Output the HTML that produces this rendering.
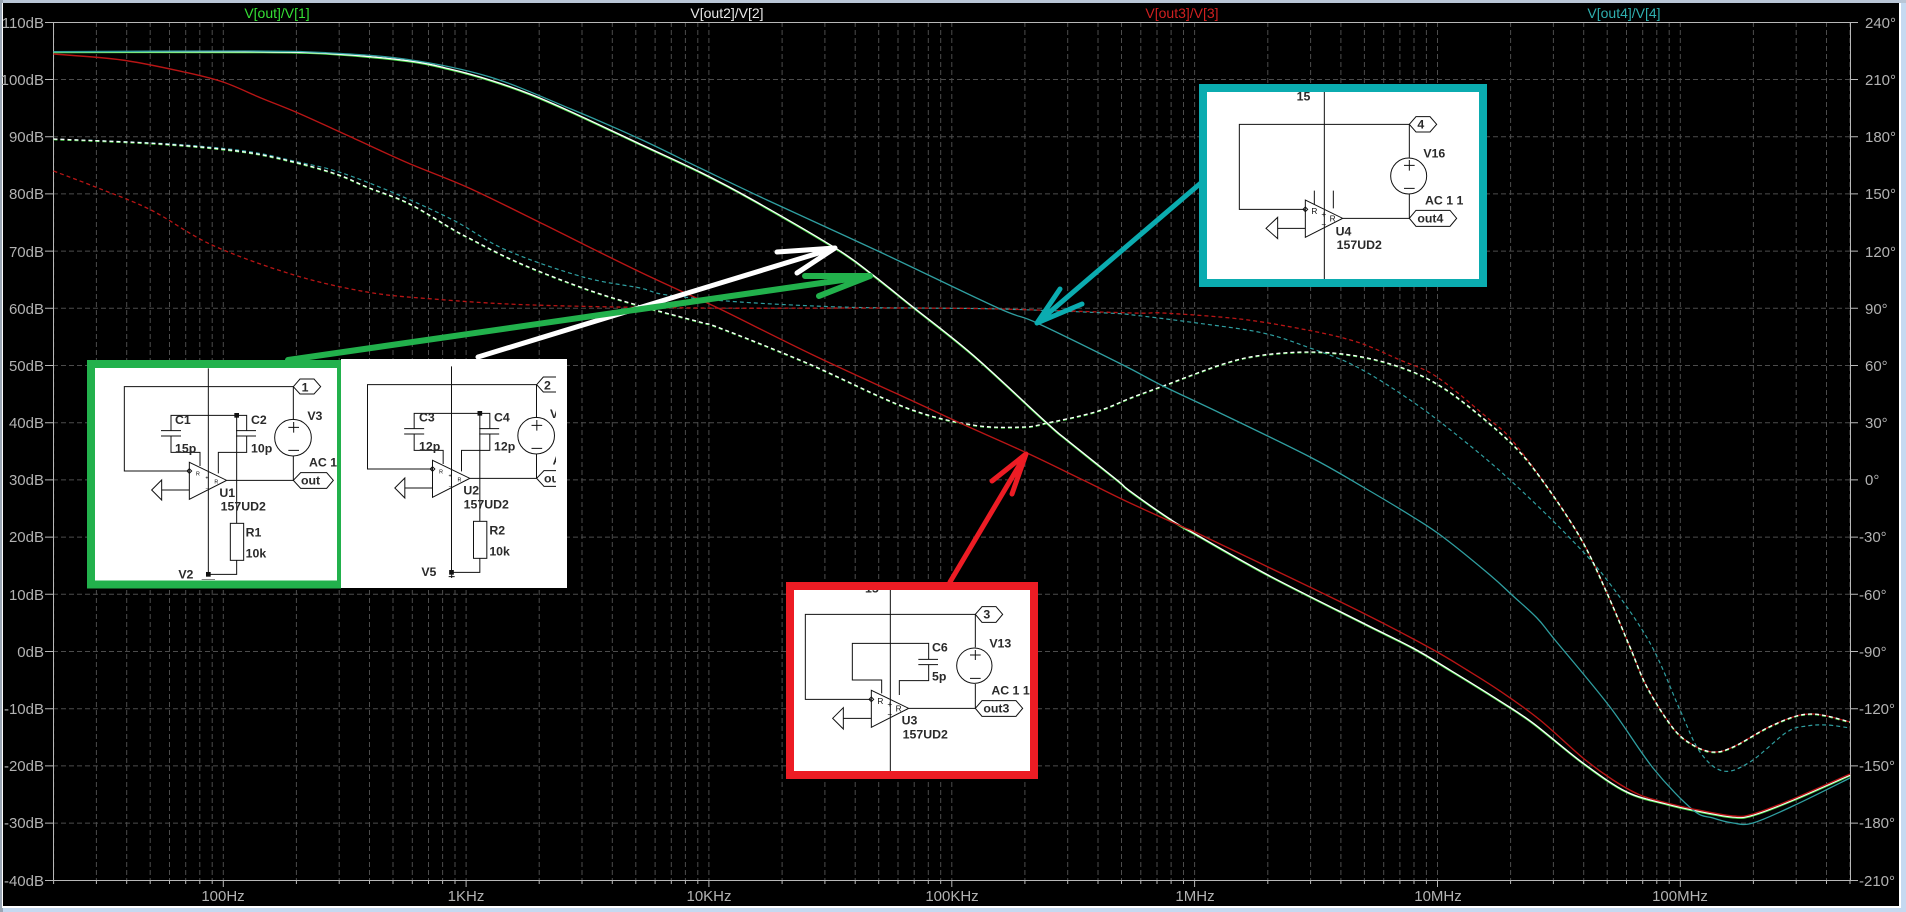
<!DOCTYPE html>
<html>
<head>
<meta charset="utf-8">
<style>
html,body{margin:0;padding:0;width:1906px;height:912px;overflow:hidden;background:#c5d9f0}
svg{display:block;position:absolute;left:0;top:0}
text{font-family:"Liberation Sans",sans-serif}
.ax text{font-size:15px;fill:#b2b2b2}
.hd text{font-size:14px;text-anchor:middle}
.sc text{font-size:37px;font-weight:bold;fill:#2a2a2a}
.sc .s{font-size:25px;font-weight:normal;fill:#111}
.w{fill:none;stroke:#111;stroke-width:3}
</style>
</head>
<body>
<svg width="1906" height="912" viewBox="0 0 1906 912">
<defs>
<clipPath id="pl"><rect x="53" y="22" width="1798" height="859"/></clipPath>
<clipPath id="cg"><rect x="95" y="368" width="242" height="212"/></clipPath>
<clipPath id="cw"><rect x="341" y="359" width="215" height="229"/></clipPath>
<clipPath id="ct"><rect x="1207" y="92" width="272" height="187"/></clipPath>
<clipPath id="cr"><rect x="794" y="590" width="236" height="181"/></clipPath>
<path id="dec" d="M73.1 22V880M115.9 22V880M146.2 22V880M169.7 22V880M189 22V880M205.2 22V880M219.3 22V880M231.7 22V880M242.8 22V880"/>
<path id="tic" d="M73.1 880v4M115.9 880v4M146.2 880v4M169.7 880v4M189 880v4M205.2 880v4M219.3 880v4M231.7 880v4M242.8 880v7"/>
<g id="sch">
<path class="w" d="M670 140H163V393H358M415 85V703M670 140V240M670 347V421M470 421H670M358 367V478L470 421ZM275 450H358M303 272V226H530V272M273 272H333M273 288H333M498 272H558M498 288H558M303 288V337H390V378M530 288V337H445V400M500 226V550M500 661V703H415M655 262H687M671 246V278M655 331H687"/>
<circle class="w" cx="669" cy="293" r="55"/>
<path class="w" d="M245 450L275 420V480Z"/>
<rect class="w" x="481" y="550" width="40" height="111"/>
<rect x="493" y="219" width="14" height="14" fill="#111"/>
<rect x="408" y="696" width="14" height="14" fill="#111"/>
<path class="w" d="M351 393l7-7 7 7-7 7z"/>
<text class="s" x="378" y="406">R</text><text class="s" x="406" y="418">+</text><text class="s" x="406" y="450">−</text><text class="s" x="433" y="431">R</text>
</g>
</defs>

<rect width="1906" height="912" fill="#c5d9f0"/>
<rect x="0" y="0" width="1906" height="3" fill="#b9c6d6"/>
<rect x="0" y="0" width="3" height="912" fill="#9aa6b4"/>
<rect x="2" y="3" width="1899" height="905" fill="#fff"/>
<rect x="3" y="3" width="1896" height="903" fill="#000"/>

<!-- grid -->
<g clip-path="url(#pl)" fill="none" stroke="#4c4c4c" stroke-width="1" stroke-dasharray="5 3">
<use href="#dec" x="-19.5"/><use href="#dec" x="223.3"/><use href="#dec" x="466.1"/><use href="#dec" x="709"/><use href="#dec" x="951.8"/><use href="#dec" x="1194.7"/><use href="#dec" x="1437.5"/><use href="#dec" x="1680.3"/>
<path d="M53 79.5H1850M53 136.7H1850M53 193.9H1850M53 251.1H1850M53 308.3H1850M53 365.5H1850M53 422.7H1850M53 479.9H1850M53 537.1H1850M53 594.3H1850M53 651.5H1850M53 708.7H1850M53 765.9H1850M53 823.1H1850"/>
</g>

<!-- axes -->
<g fill="none" stroke="#b8b8b8" stroke-width="1">
<rect x="53.5" y="22.5" width="1797" height="858"/>
<path d="M45 22.5h8M45 79.5h8M45 136.7h8M45 193.9h8M45 251.1h8M45 308.3h8M45 365.5h8M45 422.7h8M45 479.9h8M45 537.1h8M45 594.3h8M45 651.5h8M45 708.7h8M45 765.9h8M45 823.1h8M45 880.5h8"/>
<path d="M1851 22.5h7M1851 79.5h7M1851 136.7h7M1851 193.9h7M1851 251.1h7M1851 308.3h7M1851 365.5h7M1851 422.7h7M1851 479.9h7M1851 537.1h7M1851 594.3h7M1851 651.5h7M1851 708.7h7M1851 765.9h7M1851 823.1h7M1851 880.5h7"/>
<use href="#tic" x="-19.5"/><use href="#tic" x="223.3"/><use href="#tic" x="466.1"/><use href="#tic" x="709"/><use href="#tic" x="951.8"/><use href="#tic" x="1194.7"/><use href="#tic" x="1437.5"/>
<path d="M1753.4 880v4M1796.2 880v4M1826.5 880v4M1850 880v4"/>
</g>

<g class="ax" text-anchor="end">
<text x="44" y="28">110dB</text><text x="44" y="85">100dB</text><text x="44" y="142">90dB</text><text x="44" y="199">80dB</text><text x="44" y="257">70dB</text><text x="44" y="314">60dB</text><text x="44" y="371">50dB</text><text x="44" y="428">40dB</text><text x="44" y="485">30dB</text><text x="44" y="542">20dB</text><text x="44" y="600">10dB</text><text x="44" y="657">0dB</text><text x="44" y="714">-10dB</text><text x="44" y="771">-20dB</text><text x="44" y="828">-30dB</text><text x="44" y="886">-40dB</text>
</g>
<g class="ax">
<text x="1865" y="28">240°</text><text x="1865" y="85">210°</text><text x="1865" y="142">180°</text><text x="1865" y="199">150°</text><text x="1865" y="257">120°</text><text x="1865" y="314">90°</text><text x="1865" y="371">60°</text><text x="1865" y="428">30°</text><text x="1865" y="485">0°</text><text x="1859" y="542">-30°</text><text x="1859" y="600">-60°</text><text x="1859" y="657">-90°</text><text x="1859" y="714">-120°</text><text x="1859" y="771">-150°</text><text x="1859" y="828">-180°</text><text x="1859" y="886">-210°</text>
</g>
<g class="ax" text-anchor="middle">
<text x="223" y="901">100Hz</text><text x="466" y="901">1KHz</text><text x="709" y="901">10KHz</text><text x="952" y="901">100KHz</text><text x="1195" y="901">1MHz</text><text x="1438" y="901">10MHz</text><text x="1680" y="901">100MHz</text>
</g>
<g class="hd">
<text x="277" y="18" fill="#35e035">V[out]/V[1]</text>
<text x="727" y="18" fill="#e8e8e8">V[out2]/V[2]</text>
<text x="1182" y="18" fill="#d02020">V[out3]/V[3]</text>
<text x="1624" y="18" fill="#2fb0b0">V[out4]/V[4]</text>
</g>

<!-- curves -->
<g clip-path="url(#pl)" fill="none" stroke-linejoin="round" id="curves">
<polyline stroke="#2f9ea0" stroke-width="1.2" stroke-dasharray="4 3" points="53.5 139,163 143.500,245 151,298 162,339 172,394 193,453 220,506 250,583 277,640 288,667 295,740 302,840 307,917 308,1000 309,1107 313,1133 315,1197 323,1263 333,1310 348,1357 367,1413 402,1463 440,1510 480,1567 535,1607 580,1650 643,1680 710,1700 752,1723 771,1750 762,1787 732,1807 726,1827 725,1850 728"/>
<polyline stroke="#b81515" stroke-width="1.3" stroke-dasharray="4 3" points="53.5 171,98 188,151 210,212 245,294 275,367 292,433 299,533 305,700 308,907 308,1000 309,1133 313,1163 313,1240 319,1307 330,1357 342,1400 360,1437 377,1490 420,1510 438,1540 477,1580 537,1607 593,1630 647,1647 687,1673 728,1693 745,1713 752,1733 747,1767 728,1793 717,1810 714,1827 716,1850 722"/>
<polyline stroke="#50e050" stroke-width="1.6" stroke-dasharray="4 3" transform="translate(0 .5)" points="53.5 139,163 144,245 152,298 163,339 175,367 187,408 203,449 227,467 237,517 262,583 288,637 305,700 322,720 328,807 363,907 408,973 425,1023 427,1047 423,1095 412,1133 397,1163 386,1223 364,1263 355,1313 352,1357 356,1397 366,1430 380,1463 402,1510 442,1540 477,1580 537,1607 593,1630 647,1647 687,1673 728,1693 745,1713 752,1733 747,1767 728,1793 717,1810 714,1827 716,1850 722"/>
<polyline stroke="#fff" stroke-width="1.3" stroke-dasharray="4 3" points="53.5 139,163 144,245 152,298 163,339 175,367 187,408 203,449 227,467 237,517 262,583 288,637 305,700 322,720 328,807 363,907 408,973 425,1023 427,1047 423,1095 412,1133 397,1163 386,1223 364,1263 355,1313 352,1357 356,1397 366,1430 380,1463 402,1510 442,1540 477,1580 537,1607 593,1630 647,1647 687,1673 728,1693 745,1713 752,1733 747,1767 728,1793 717,1810 714,1827 716,1850 722"/>
<polyline stroke="#4fe04f" stroke-width="1.8" transform="translate(0 .6)" points="53.5 51.7,245 51.7,326 53.3,408 60.7,450 69,490 80,530 94,571 111.7,640 144,700 172,753 200,837 249,873 275,913 307,973 355,1047 423,1067 440,1117 480,1130 491,1173 521,1197 535,1268 575,1363 623,1413 648,1450 670,1500 701,1533 723,1583 763,1627 792,1667 804,1693 810,1733 817,1753 815,1793 800,1850 775"/>
<polyline stroke="#fff" stroke-width="1.3" points="53.5 51.7,245 51.7,326 53.3,408 60.7,450 69,490 80,530 94,571 111.7,640 144,700 172,753 200,837 249,873 275,913 307,973 355,1047 423,1067 440,1117 480,1130 491,1173 521,1197 535,1268 575,1363 623,1413 648,1450 670,1500 701,1533 723,1583 763,1627 792,1667 804,1693 810,1733 817,1753 815,1793 800,1850 775"/>
<polyline stroke="#2f9ea0" stroke-width="1.3" points="53.5 51.7,245 51,326 52.7,408 59.5,490 77,571 109,640 139,700 168,767 200,880 252,998 308,1037 323,1123 365,1163 386,1220 413,1310 457,1363 487,1413 517,1443 537,1490 575,1512 595,1537 618,1555 640,1610 707,1653 768,1693 810,1713 818,1733 823,1753 823,1793 806,1850 778"/>
<polyline stroke="#b81515" stroke-width="1.4" points="53.5 54,122 60,184 72,223 82,261 98,298 113,351 137,408 163,469 188,543 224,583 244,640 272,683 292,720 309,813 355,917 403,960 423,1027 453,1083 480,1130 503,1183 527,1197 533,1268 567,1363 613,1430 648,1467 670,1500 691,1540 720,1583 758,1613 780,1640 795,1667 803,1693 809,1733 816,1753 814,1793 799,1850 774"/>
</g>

<!-- arrows -->
<g fill="none" stroke-linecap="round" stroke-linejoin="round" stroke-width="5">
<path stroke="#fff" d="M478 357L835 248M777 252L835 248L797 273"/>
<path stroke="#22b14c" stroke-width="6" d="M288 360L870 276M805 276L870 276L819 296"/>
<path stroke="#0bacb0" d="M1202 182L1037 323M1060 289L1037 323L1082 304"/>
<path stroke="#ed1c24" d="M950 582L1026 454M992 481L1026 454L1012 494"/>
</g>

<!-- green panel -->
<rect x="87" y="360" width="254" height="228.500" fill="#22b14c"/>
<rect x="95" y="368" width="242" height="212.500" fill="#fff"/>
<g clip-path="url(#cg)"><g class="sc" transform="translate(70 340) scale(.33333)">
<use href="#sch"/>
<path class="w" d="M670 140l20-23h42l20 23-20 22h-42zM670 421l22-23h78l20 23-20 24h-78zM395 720h40"/>
<text x="695" y="155">1</text><text x="693" y="434">out</text>
<text x="315" y="252">C1</text><text x="315" y="338">15p</text><text x="543" y="252">C2</text><text x="543" y="338">10p</text>
<text x="712" y="240">V3</text><text x="717" y="380">AC 1</text><text x="448" y="471">U1</text><text x="452" y="512">157UD2</text>
<text x="527" y="590">R1</text><text x="527" y="652">10k</text><text x="325" y="716">V2</text>
</g></g>

<!-- white panel -->
<rect x="341" y="359" width="226" height="229" fill="#fff"/>
<g clip-path="url(#cw)"><g class="sc" transform="translate(70 340) scale(.33333)">
<use href="#sch" x="729.500" y="-6"/>
<path class="w" d="M1400 134l20-23h42l20 23-20 22h-42zM1400 415l22-23h78l20 23-20 24h-78zM1145 704v10M1136 710h18"/>
<text x="1422" y="149">2</text><text x="1422" y="428">out</text>
<text x="1047" y="245">C3</text><text x="1047" y="332">12p</text><text x="1272" y="245">C4</text><text x="1272" y="332">12p</text>
<text x="1440" y="234">V5</text><text x="1448" y="374">AC</text><text x="1180" y="464">U2</text><text x="1181" y="506">157UD2</text>
<text x="1258" y="584">R2</text><text x="1258" y="646">10k</text><text x="1054" y="708">V5</text>
</g></g>
<rect x="556" y="359" width="11" height="229" fill="#fff"/>

<!-- teal panel -->
<rect x="1199" y="84" width="288" height="203" fill="#0bacb0"/>
<rect x="1207" y="92" width="272" height="187" fill="#fff"/>
<g clip-path="url(#ct)"><g class="sc" transform="translate(1180 70) scale(.33333)">
<path class="w" d="M433 66V627M688 163H178V418H376M688 163V263M688 372V445M488 445H688M376 390V502L488 445ZM293 475H376M403 362V405M460 362V415M672 286H704M688 270V302M672 355H704"/>
<circle class="w" cx="686" cy="318" r="54"/>
<path class="w" d="M258 475L293 442V506Z"/>
<path class="w" d="M688 163l20-23h42l20 23-20 23h-42zM688 445l20-24h102l20 24-20 24H708zM369 418l7-7 7 7-7 7z"/>
<text x="712" y="176">4</text><text x="712" y="458">out4</text>
<text x="350" y="92">15</text><text x="730" y="263">V16</text><text x="735" y="404">AC 1 1</text><text x="467" y="496">U4</text><text x="470" y="537">157UD2</text>
<text class="s" x="394" y="432">R</text><text class="s" x="424" y="441">+</text><text class="s" x="424" y="472">−</text><text class="s" x="449" y="455">R</text>
</g></g>

<!-- red panel -->
<rect x="786" y="582" width="252" height="197" fill="#ed1c24"/>
<rect x="794" y="590" width="236" height="181" fill="#fff"/>
<g clip-path="url(#cr)"><g class="sc" transform="translate(770 570) scale(.33333)">
<path class="w" d="M361 60V603M616 133H106V388H304M616 133V232M616 342V415M416 415H616M304 361V472L416 415ZM220 445H304M335 370V330H247V220H476V268M445 268H504M445 284H504M476 284V332H388V375M600 255H632M616 240V270M600 325H632"/>
<circle class="w" cx="613" cy="287" r="53"/>
<path class="w" d="M188 445L220 413V477Z"/>
<path class="w" d="M616 133l20-23h42l20 23-20 24h-42zM616 415l20-23h102l20 23-20 24H636zM297 388l7-7 7 7-7 7z"/>
<text x="640" y="146">3</text><text x="640" y="428">out3</text>
<text x="285" y="68">15</text><text x="486" y="245">C6</text><text x="486" y="332">5p</text><text x="658" y="232">V13</text><text x="664" y="373">AC 1 1</text><text x="395" y="463">U3</text><text x="398" y="505">157UD2</text>
<text class="s" x="322" y="402">R</text><text class="s" x="352" y="411">+</text><text class="s" x="352" y="442">−</text><text class="s" x="377" y="425">R</text>
</g></g>
</svg>
<script>
(function(){
var NS="http://www.w3.org/2000/svg",ls=document.querySelectorAll("#curves polyline");
for(var i=0;i<ls.length;i++){
var l=ls[i],n=l.getAttribute("points").split(",").map(function(s){return s.trim().split(/\s+/).map(Number)});
var d="M"+n[0][0]+" "+n[0][1];
for(var k=0;k<n.length-1;k++){
var a=n[Math.max(k-1,0)],b=n[k],c=n[k+1],e=n[Math.min(k+2,n.length-1)];
d+="C"+(b[0]+(c[0]-a[0])/6).toFixed(1)+" "+(b[1]+(c[1]-a[1])/6).toFixed(1)+" "+(c[0]-(e[0]-b[0])/6).toFixed(1)+" "+(c[1]-(e[1]-b[1])/6).toFixed(1)+" "+c[0]+" "+c[1];
}
var p=document.createElementNS(NS,"path");
for(var j=0;j<l.attributes.length;j++){var t=l.attributes[j];if(t.name!="points")p.setAttribute(t.name,t.value);}
p.setAttribute("d",d);l.parentNode.replaceChild(p,l);
}
})();
</script>
</body>
</html>
